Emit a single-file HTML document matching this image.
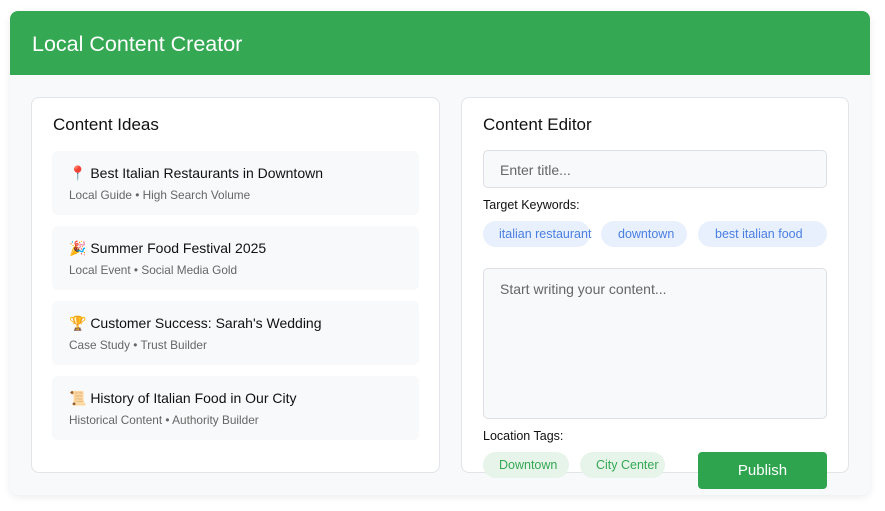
<!DOCTYPE html>
<html><head><meta charset="utf-8"><style>
*{box-sizing:border-box;margin:0;padding:0}
body{width:885px;height:511px;background:#fff;font-family:"Liberation Sans",Arial,sans-serif;position:relative;overflow:hidden}
.wrap{position:absolute;left:10px;top:11px;width:860px;height:484px;background:#f8f9fa;border-radius:8px;box-shadow:0 2px 8px rgba(0,0,0,.08);overflow:hidden}
.hdr{position:absolute;left:0;top:0;width:860px;height:64px;background:#34a853;color:#fff;font-size:21.5px;padding:21px 0 0 22px}
.card{position:absolute;background:#fff;border:1px solid #e1e4e8;border-radius:8px}
.h2{position:absolute;font-size:17px;color:#111}
.item{position:absolute;left:52px;width:367px;height:64px;background:#f8f9fa;border-radius:6px}
.item .t{position:absolute;left:17px;top:14px;font-size:14px;color:#111}
.item .s{position:absolute;left:17px;top:37px;font-size:11.8px;color:#666}
.abs{position:absolute}
.chip{position:absolute;height:26px;border-radius:13px;font-size:12.5px;line-height:26px;white-space:nowrap}
.kw{background:#e8f0fe;color:#4a7fe0}
.loc{background:#e6f4ea;color:#34a853}
</style></head><body>
<div class="wrap"><div class="hdr">Local Content Creator</div></div>
<div class="card" style="left:31px;top:97px;width:409px;height:376px"></div>
<div class="card" style="left:461px;top:97px;width:388px;height:376px"></div>
<div class="h2" style="left:53px;top:115px">Content Ideas</div>
<div class="item" style="top:151px"><div class="t">📍 Best Italian Restaurants in Downtown</div><div class="s">Local Guide • High Search Volume</div></div>
<div class="item" style="top:226px"><div class="t">🎉 Summer Food Festival 2025</div><div class="s">Local Event • Social Media Gold</div></div>
<div class="item" style="top:301px"><div class="t">🏆 Customer Success: Sarah's Wedding</div><div class="s">Case Study • Trust Builder</div></div>
<div class="item" style="top:376px"><div class="t">📜 History of Italian Food in Our City</div><div class="s">Historical Content • Authority Builder</div></div>
<div class="h2" style="left:483px;top:115px">Content Editor</div>
<div class="abs" style="left:483px;top:150px;width:344px;height:38px;background:#f8f9fa;border:1px solid #dcdfe3;border-radius:5px;font-size:14px;color:#666;padding:11px 0 0 16px">Enter title...</div>
<div class="abs" style="left:483px;top:198px;font-size:12.5px;color:#111">Target Keywords:</div>
<div class="chip kw" style="left:483px;top:221px;width:107px;padding-left:16px">italian restaurant</div>
<div class="chip kw" style="left:601px;top:221px;width:86px;padding-left:17px">downtown</div>
<div class="chip kw" style="left:698px;top:221px;width:129px;padding-left:17px">best italian food</div>
<div class="abs" style="left:483px;top:268px;width:344px;height:151px;background:#f8f9fa;border:1px solid #dcdfe3;border-radius:5px;font-size:14px;color:#666;padding:12px 0 0 16px">Start writing your content...</div>
<div class="abs" style="left:483px;top:429px;font-size:12.5px;color:#111">Location Tags:</div>
<div class="chip loc" style="left:483px;top:452px;width:86px;padding-left:16px">Downtown</div>
<div class="chip loc" style="left:580px;top:452px;width:85px;padding-left:16px">City Center</div>
<div class="abs" style="left:698px;top:452px;width:129px;height:37px;background:#2ea44f;border-radius:4px;color:#fff;font-size:15px;text-align:center;line-height:37px">Publish</div>
</body></html>
